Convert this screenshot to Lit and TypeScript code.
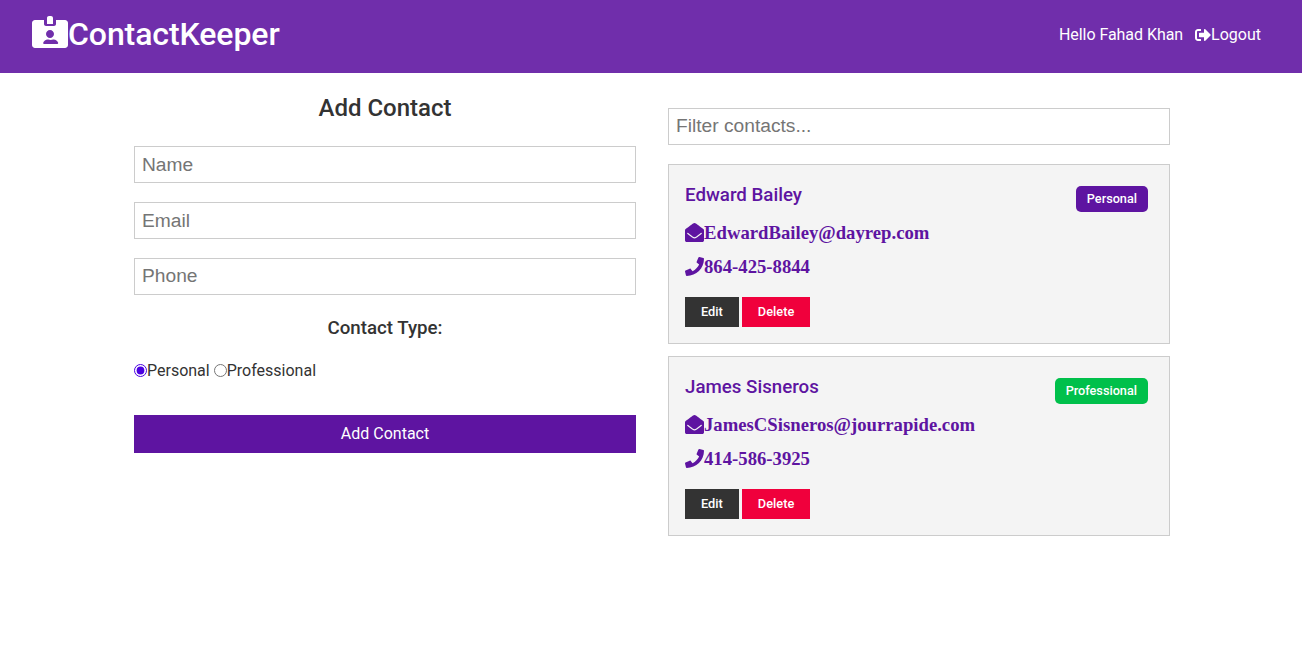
import { LitElement, html, css, svg } from "lit";
import { customElement } from "lit/decorators.js";

const icon = (vb: string, d: string, cls: string) =>
  html`<svg class=${cls} viewBox=${vb} aria-hidden="true">${svg`<path fill="currentColor" d=${d}></path>`}</svg>`;

const ID_CARD =
  "M528 64H384v64c0 17.7-14.3 32-32 32H224c-17.7 0-32-14.3-32-32V64H48C21.5 64 0 85.5 0 112v352c0 26.5 21.5 48 48 48h480c26.5 0 48-21.5 48-48V112c0-26.5-21.5-48-48-48zM288 224c35.3 0 64 28.7 64 64s-28.7 64-64 64-64-28.7-64-64 28.7-64 64-64zm93.3 224H194.7c-10.4 0-18.8-10-15.4-19.8 10.2-29.7 38.500-51.200 71.800-51.200h8.100c12.300 5.100 25.700 8 39.800 8s27.600-2.900 39.800-8h8.100c33.300 0 61.600 21.500 71.800 51.200 3.400 9.800-5 19.800-15.400 19.800zM336 32c0-17.700-14.300-32-32-32h-32c-17.700 0-32 14.300-32 32v96h96V32z";
const SIGN_OUT =
  "M497 273L329 441c-15 15-41 4.500-41-17v-96H152c-13.300 0-24-10.700-24-24v-96c0-13.300 10.700-24 24-24h136V88c0-21.400 25.900-32 41-17l168 168c9.300 9.400 9.300 24.600 0 34zM192 436v-40c0-6.600-5.400-12-12-12H96c-17.700 0-32-14.300-32-32V160c0-17.700 14.300-32 32-32h84c6.600 0 12-5.400 12-12V76c0-6.600-5.400-12-12-12H96c-53 0-96 43-96 96v192c0 53 43 96 96 96h84c6.600 0 12-5.400 12-12z";
const ENVELOPE =
  "M512 464c0 26.510-21.490 48-48 48H48c-26.510 0-48-21.490-48-48V200.724a48 48 0 0 1 18.387-37.776c24.913-19.529 45.501-35.365 164.200-121.511C199.412 29.170 232.797-.347 256 .003c23.198-.354 56.596 29.172 73.413 41.433 118.687 86.137 139.303 101.995 164.200 121.512A48 48 0 0 1 512 200.724V464zm-65.666-196.605c-2.563-3.728-7.700-4.595-11.339-1.907-22.845 16.873-55.462 40.705-105.582 77.079-16.825 12.266-50.210 41.781-73.413 41.430-23.211.344-56.559-29.143-73.413-41.430-50.114-36.370-82.734-60.204-105.582-77.079-3.639-2.688-8.776-1.821-11.339 1.907l-9.072 13.196a7.998 7.998 0 0 0 1.839 10.967c22.887 16.899 55.454 40.690 105.303 76.868 20.274 14.781 56.524 47.813 92.264 47.573 35.724.242 71.961-32.771 92.263-47.573 49.850-36.179 82.418-59.970 105.303-76.868a7.998 7.998 0 0 0 1.839-10.967l-9.071-13.196z";
const PHONE =
  "M493.400 24.600l-104-24c-11.300-2.600-22.900 3.300-27.500 13.900l-48 112c-4.200 9.800-1.400 21.300 6.900 28l60.600 49.600c-36 76.700-98.900 140.500-177.200 177.200l-49.600-60.600c-6.800-8.300-18.200-11.100-28-6.900l-112 48C3.900 366.500-2 378.100.6 389.400l24 104C27.100 504.200 36.700 512 48 512c256.100 0 464-207.500 464-464 0-11.200-7.700-20.900-18.600-23.400z";

const contacts = [
  { name: "Edward Bailey", email: "EdwardBailey@dayrep.com", phone: "864-425-8844", type: "Personal" },
  { name: "James Sisneros", email: "JamesCSisneros@jourrapide.com", phone: "414-586-3925", type: "Professional" },
];

@customElement("app-root")
export class AppRoot extends LitElement {
  static styles = css`
    :host {
      display: block;
      font-family: Roboto, sans-serif;
      font-size: 16px;
      line-height: 1.6;
      color: #333;
      background: #fff;
      min-height: 647px;
    }
    * { box-sizing: border-box; }
    .navbar {
      display: flex;
      justify-content: space-between;
      align-items: center;
      height: 73px;
      padding: 0 41px 4px 32px;
      background: #702eab;
      color: #fff;
    }
    .brand {
      display: flex;
      align-items: center;
      margin: 0;
      font-size: 32px;
      font-weight: 500;
      line-height: 1.6;
      letter-spacing: -0.08px;
    }
    .brand-icon { width: 36px; height: 32px; display: block; margin-bottom: 5px; }
    .nav-links { display: flex; align-items: center; gap: 12px; }
    .hello { letter-spacing: -0.05px; }
    .logout { display: flex; align-items: center; }
    .logout-icon { width: 16px; height: 16px; display: block; }
    .container {
      display: grid;
      grid-template-columns: 502px 502px;
      justify-content: center;
      gap: 32px;
      padding: 16px 0 0 2px;
    }
    h2 {
      margin: 0;
      text-align: center;
      font-size: 24px;
      font-weight: 500;
      line-height: 38px;
    }
    form { display: flex; flex-direction: column; }
    .title { margin-bottom: 19px; }
    input[type="text"] {
      display: block;
      width: 100%;
      height: 37px;
      padding: 0 7px 2px 7px;
      border: 1px solid #ccc;
      border-radius: 0;
      font-family: "Liberation Sans", Arial, sans-serif;
      font-size: 19.200px;
      color: #333;
      background: #fff;
      outline: none;
    }
    input[type="text"].low { padding-bottom: 0; }
    input::placeholder { color: #757575; }
    .field { margin-bottom: 19px; }
    .type-label {
      margin: 0 0 16px;
      text-align: center;
      font-size: 18.720px;
      font-weight: 500;
      line-height: 28px;
    }
    .radios {
      display: flex;
      align-items: center;
      height: 26px;
      margin-bottom: 31px;
    }
    .radios input { width: 13px; height: 13px; margin: 0 0 2px; accent-color: #4a00e0; }
    .radios label + input { margin-left: 4px; }
    .submit {
      display: block;
      width: 100%;
      height: 38px;
      padding: 0 0 1px;
      border: 0;
      background: #5e14a1;
      color: #fff;
      font: 400 16px Roboto, sans-serif;
    }
    .contacts { padding-top: 19px; }
    .filter { margin-bottom: 19px; }
    .card {
      height: 180px;
      margin-bottom: 12px;
      padding: 16px;
      border: 1px solid #ccc;
      background: #f4f4f4;
      color: #5e14a1;
    }
    .top { display: flex; justify-content: space-between; align-items: flex-start; height: 35px; padding-right: 5px; }
    h3 {
      margin: 0;
      font-size: 18.720px;
      font-weight: 500;
      line-height: 28px;
    }
    .badge {
      margin-top: 5px;
      height: 26px;
      padding: 0 11px;
      border-radius: 5px;
      color: #fff;
      font-size: 12.700px;
      font-weight: 500;
      line-height: 25px;
    }
    .Personal { background: #5e14a1; }
    .Professional { background: #00c04b; }
    .info {
      display: flex;
      align-items: center;
      height: 34px;
      font-family: "Liberation Serif", "Times New Roman", serif;
      font-size: 18.720px;
      font-weight: 700;
    }
    .info svg { width: 19px; height: 19px; display: block; flex: none; margin-bottom: 2px; }
    .actions { display: flex; gap: 3px; margin-top: 13px; }
    .btn {
      height: 30px;
      padding: 0 16px 2px;
      border: 0;
      color: #fff;
      font: 500 12.800px Roboto, sans-serif;
    }
    .edit { background: #333; }
    .delete { background: #f0003c; }
  `;

  render() {
    return html`
      <nav class="navbar">
        <h1 class="brand">${icon("0 0 576 512", ID_CARD, "brand-icon")}<span>ContactKeeper</span></h1>
        <div class="nav-links">
          <span class="hello">Hello Fahad Khan</span>
          <span class="logout">${icon("0 0 512 512", SIGN_OUT, "logout-icon")}<span>Logout</span></span>
        </div>
      </nav>
      <main class="container">
        <form>
          <h2 class="title">Add Contact</h2>
          <input class="field low" type="text" placeholder="Name" />
          <input class="field low" type="text" placeholder="Email" />
          <input class="field" type="text" placeholder="Phone" />
          <p class="type-label">Contact Type:</p>
          <div class="radios">
            <input type="radio" name="type" id="p1" checked />
            <label for="p1">Personal</label>
            <input type="radio" name="type" id="p2" />
            <label for="p2">Professional</label>
          </div>
          <button class="submit" type="button">Add Contact</button>
        </form>
        <section class="contacts">
          <input class="filter" type="text" placeholder="Filter contacts..." />
          ${contacts.map(
            (c) => html`
              <article class="card">
                <div class="top">
                  <h3>${c.name}</h3>
                  <span class="badge ${c.type}">${c.type}</span>
                </div>
                <div class="info">${icon("0 0 512 512", ENVELOPE, "")}<span>${c.email}</span></div>
                <div class="info">${icon("0 0 512 512", PHONE, "")}<span>${c.phone}</span></div>
                <div class="actions">
                  <button class="btn edit" type="button">Edit</button>
                  <button class="btn delete" type="button">Delete</button>
                </div>
              </article>
            `
          )}
        </section>
      </main>
    `;
  }
}
